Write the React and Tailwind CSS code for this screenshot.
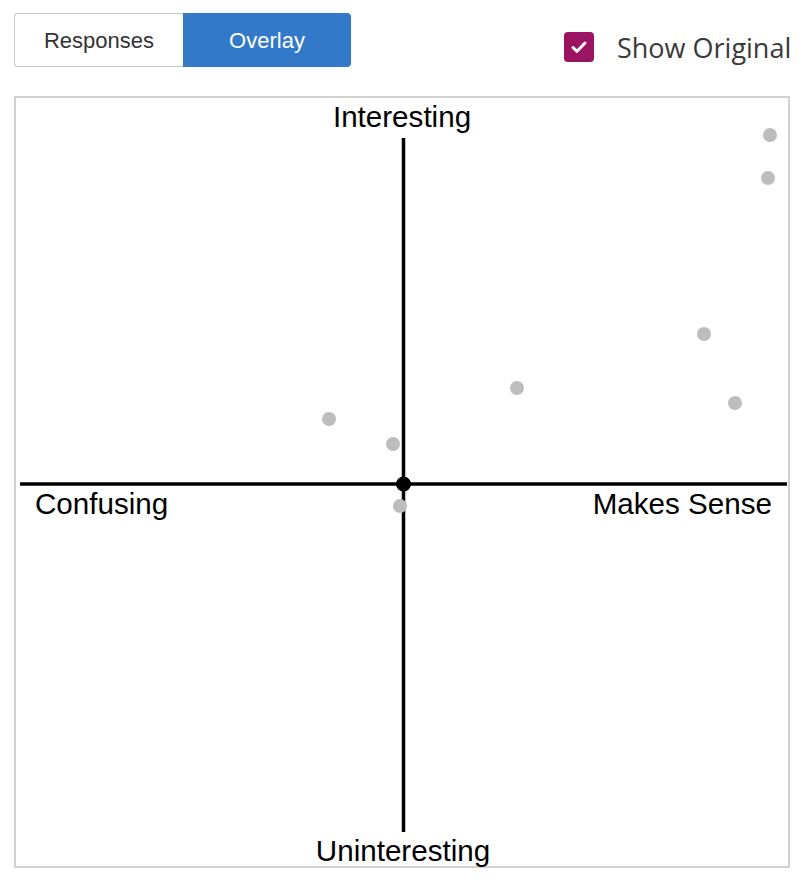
import React from "react";

const dots = [
  [770, 135],
  [768, 178],
  [704, 334],
  [517, 388],
  [735, 403],
  [329, 419],
  [393, 444],
  [400, 506],
];

export default function App() {
  return (
    <div className="w-[800px] h-[882px] bg-white relative overflow-hidden">
      <div className="flex items-start pt-[13px] pl-[14px]">
        <div className="flex h-[54px]">
          <button className="w-[169px] h-[54px] border border-[#c6c6c6] border-r-0 rounded-l-[4px] bg-white text-[#333] text-[22px] font-['Liberation_Sans',Arial,sans-serif]">
            Responses
          </button>
          <button className="w-[168px] h-[54px] bg-[#3279c9] rounded-r-[4px] text-white text-[22px] font-['Liberation_Sans',Arial,sans-serif]">
            Overlay
          </button>
        </div>
        <div className="ml-[213px] mt-[19px] flex items-center">
          <div className="w-[30px] h-[30px] rounded-[4px] bg-[#9a1461] flex items-center justify-center">
            <svg width="22" height="22" viewBox="0 0 22 22" fill="none">
              <path d="M5 11.5 L9 15.3 L17 7" stroke="white" strokeWidth="3" strokeLinecap="round" strokeLinejoin="round" />
            </svg>
          </div>
          <span className="ml-[23px] text-[27px] leading-none text-[#3a3a3a] font-['Open_Sans',sans-serif]">
            Show Original
          </span>
        </div>
      </div>
      <div className="relative ml-[14px] mt-[29px] w-[776px] h-[772px] border-2 border-[#d2d2d2]">
        <svg
          className="absolute top-[-2px] left-[-2px]"
          width="776"
          height="772"
          viewBox="14 96 776 772"
        >
          <line x1="403.5" y1="138" x2="403.5" y2="832" stroke="#000" strokeWidth="3.5" />
          <line x1="20" y1="484" x2="787" y2="484" stroke="#000" strokeWidth="3.5" />
          {dots.map(([x, y], i) => (
            <circle key={i} cx={x} cy={y} r="7" fill="#bdbdbd" />
          ))}
          <circle cx="403.5" cy="484" r="7.5" fill="#000" />
          <g fontFamily="'Liberation Sans', Arial, sans-serif" fontSize="29.6" fill="#000">
            <text x="402" y="127" textAnchor="middle">Interesting</text>
            <text x="35" y="514">Confusing</text>
            <text x="772" y="514" textAnchor="end">Makes Sense</text>
            <text x="403" y="861" textAnchor="middle">Uninteresting</text>
          </g>
        </svg>
      </div>
    </div>
  );
}
